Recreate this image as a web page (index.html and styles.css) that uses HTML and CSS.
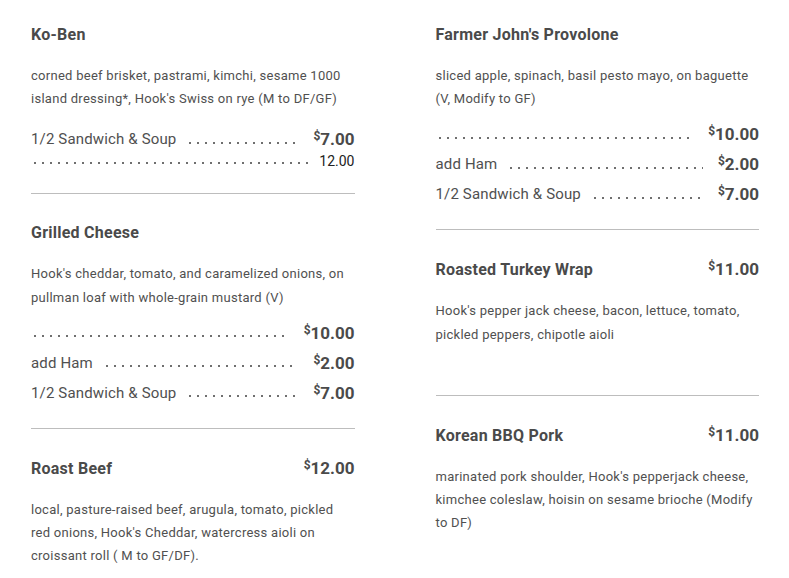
FILE: index.html
```html
<!DOCTYPE html>
<html lang="en">
<head>
<meta charset="utf-8">
<title>Sandwiches</title>
<link rel="stylesheet" href="styles.css">
</head>
<body>
<main class="menu">
  <section class="col">
    <article class="item">
      <h3 class="item-head"><span class="item-name">Ko-Ben</span></h3>
      <p class="desc">corned beef brisket, pastrami, kimchi, sesame 1000 island dressing*, Hook's Swiss on rye (M to DF/GF)</p>
      <ul class="prices prices--spaced">
        <li class="row"><span class="label">1/2 Sandwich &amp; Soup</span><span class="leader"></span><span class="price"><sup>$</sup>7.00</span></li>
        <li class="row row--small"><span class="leader leader--tight"></span><span class="price price--plain">12.00</span></li>
      </ul>
    </article>
    <article class="item">
      <h3 class="item-head"><span class="item-name">Grilled Cheese</span></h3>
      <p class="desc">Hook's cheddar, tomato, and caramelized onions, on pullman loaf with whole-grain mustard (V)</p>
      <ul class="prices">
        <li class="row"><span class="leader"></span><span class="price"><sup>$</sup>10.00</span></li>
        <li class="row"><span class="label">add Ham</span><span class="leader"></span><span class="price"><sup>$</sup>2.00</span></li>
        <li class="row"><span class="label">1/2 Sandwich &amp; Soup</span><span class="leader"></span><span class="price"><sup>$</sup>7.00</span></li>
      </ul>
    </article>
    <article class="item">
      <h3 class="item-head"><span class="item-name">Roast Beef</span><span class="price"><sup>$</sup>12.00</span></h3>
      <p class="desc">local, pasture-raised beef, arugula, tomato, pickled red onions, Hook's Cheddar, watercress aioli on croissant roll ( M to GF/DF).</p>
    </article>
  </section>
  <section class="col">
    <article class="item">
      <h3 class="item-head"><span class="item-name">Farmer John's Provolone</span></h3>
      <p class="desc">sliced apple, spinach, basil pesto mayo, on baguette (V, Modify to GF)</p>
      <ul class="prices">
        <li class="row"><span class="leader"></span><span class="price"><sup>$</sup>10.00</span></li>
        <li class="row"><span class="label">add Ham</span><span class="leader"></span><span class="price"><sup>$</sup>2.00</span></li>
        <li class="row"><span class="label">1/2 Sandwich &amp; Soup</span><span class="leader"></span><span class="price"><sup>$</sup>7.00</span></li>
      </ul>
    </article>
    <article class="item item--spacious">
      <h3 class="item-head"><span class="item-name">Roasted Turkey Wrap</span><span class="price"><sup>$</sup>11.00</span></h3>
      <p class="desc">Hook's pepper jack cheese, bacon, lettuce, tomato, pickled peppers, chipotle aioli</p>
    </article>
    <article class="item">
      <h3 class="item-head"><span class="item-name">Korean BBQ Pork</span><span class="price"><sup>$</sup>11.00</span></h3>
      <p class="desc">marinated pork shoulder, Hook's pepperjack cheese, kimchee coleslaw, hoisin on sesame brioche (Modify to DF)</p>
    </article>
  </section>
</main>
</body>
</html>
```

FILE: styles.css
```css
* { box-sizing: border-box; }

body {
  margin: 0;
  background: #ffffff;
  font-family: Roboto, "Noto Sans", "Liberation Sans", sans-serif;
  color: #555555;
}

.menu {
  display: grid;
  grid-template-columns: 1fr 1fr;
  column-gap: 81px;
  padding: 25px 30px 0 31px;
}

.col {
  display: flex;
  flex-direction: column;
  min-width: 0;
}

.item {
  padding: 29px 0 20px;
  border-bottom: 1px solid #bdbdbd;
}

.item:first-child { padding-top: 0; }
.item:last-child { border-bottom: none; }
.item--spacious { padding-bottom: 40px; }

.item-head {
  display: flex;
  justify-content: space-between;
  align-items: baseline;
  margin: 0;
  font-size: 16px;
  line-height: 20px;
  font-weight: 700;
  color: #4a4a4a;
}

.item-name { letter-spacing: 0.25px; }

.desc {
  margin: 19px 0 8.5px;
  font-size: 13px;
  line-height: 23.4px;
  letter-spacing: 0.27px;
  color: #505050;
}

.prices {
  list-style: none;
  margin: 0;
  padding: 0;
}

.prices--spaced { padding-top: 5px; }

.row {
  display: flex;
  font-size: 15px;
  line-height: 30px;
  color: #505050;
}

.label {
  white-space: nowrap;
  letter-spacing: 0.15px;
}

.leader {
  flex: 1;
  margin: 0 15px 0 10px;
  background-image: radial-gradient(circle at 50% 50%, #6f6f6f 0, #6f6f6f 0.75px, rgba(111,111,111,0) 1.35px);
  background-size: 8px 4px;
  background-repeat: repeat-x;
  background-position: 0 16.5px;
}

.leader:first-child { margin-left: 0; }

.price {
  font-size: 17px;
  font-weight: 700;
  color: #4a4a4a;
  white-space: nowrap;
}

.price sup {
  font-size: 12px;
  line-height: 0;
  vertical-align: 5px;
}

.row--small {
  font-size: 14px;
  line-height: 14px;
  margin-bottom: 5px;
}

.row--small .leader {
  background-position: 0 6.5px;
}

.leader--tight { margin-right: 5px; }

.price--plain {
  font-size: 14px;
  font-weight: 400;
  color: #222222;
}
```
